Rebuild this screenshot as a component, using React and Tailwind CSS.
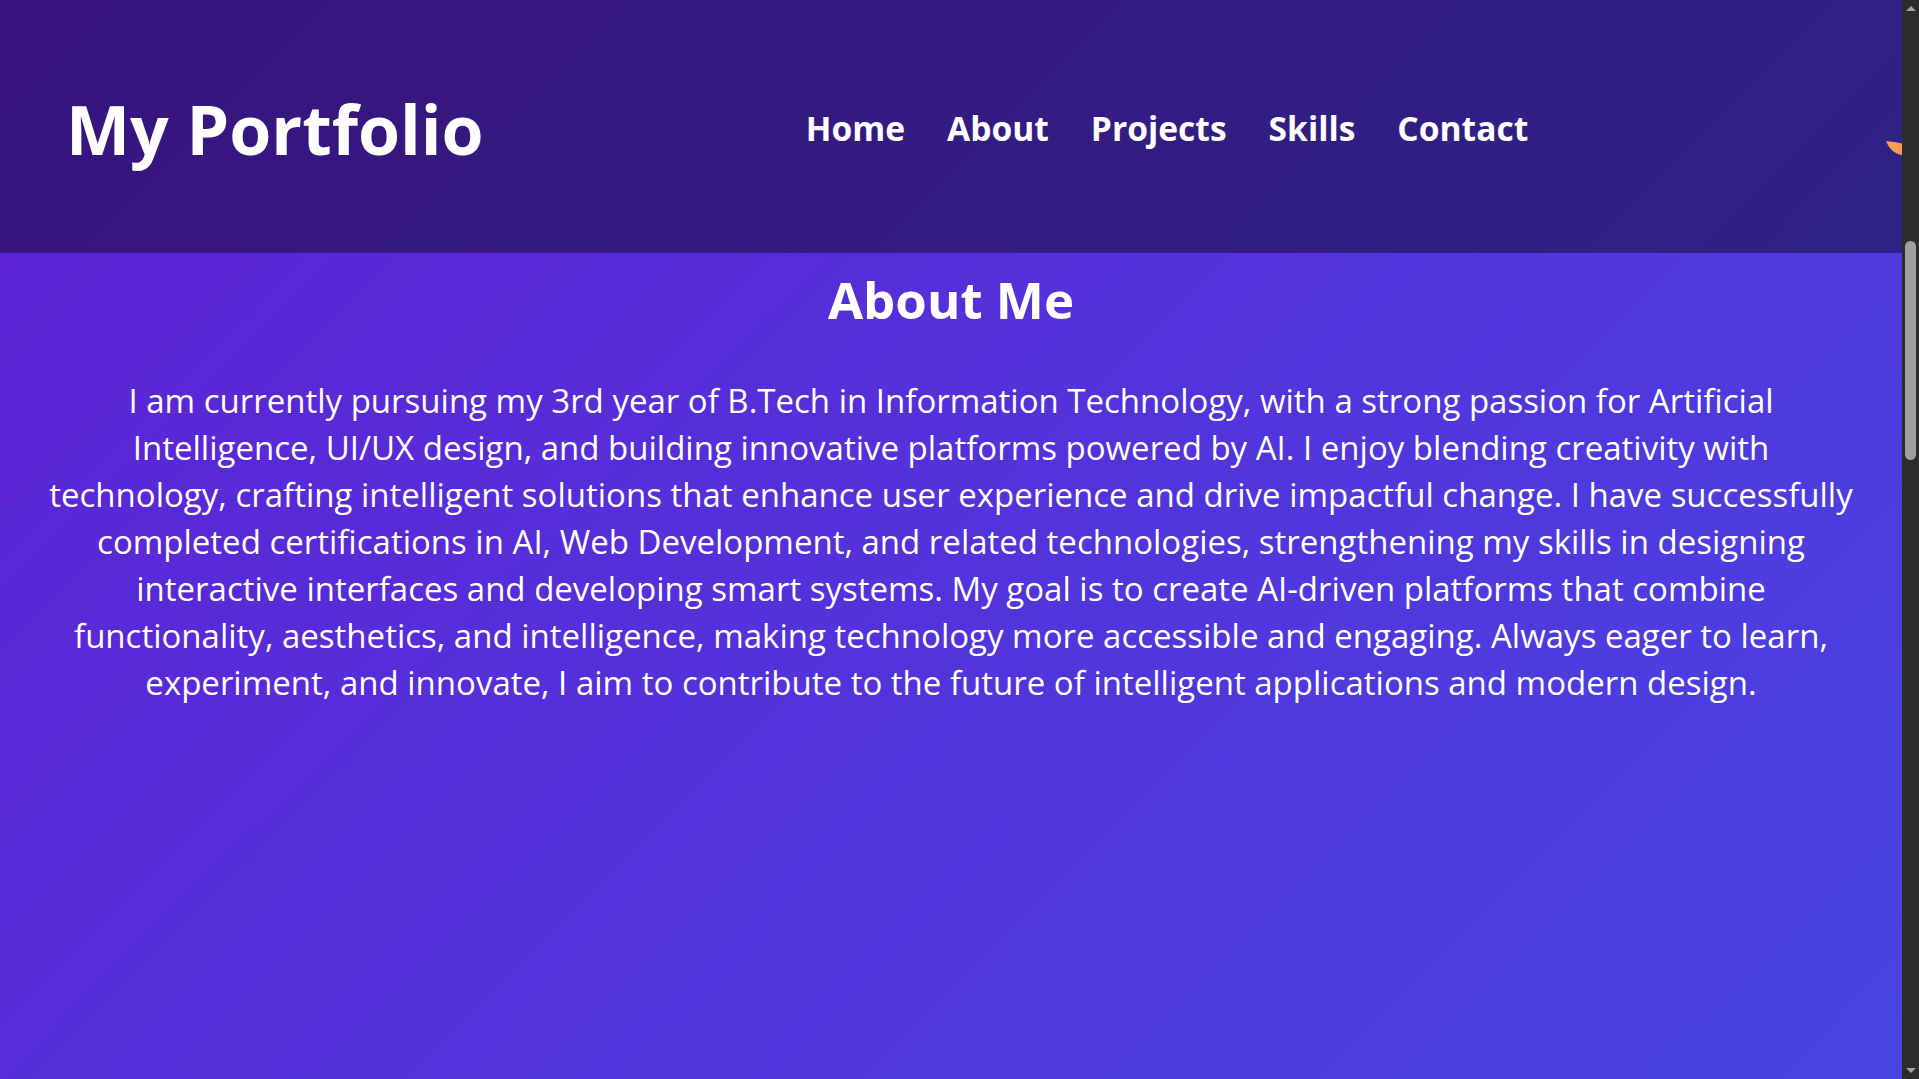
import React from "react";

const navLinks = ["Home", "About", "Projects", "Skills", "Contact"];

const aboutText =
  "I am currently pursuing my 3rd year of B.Tech in Information Technology, with a strong passion for Artificial Intelligence, UI/UX design, and building innovative platforms powered by AI. I enjoy blending creativity with technology, crafting intelligent solutions that enhance user experience and drive impactful change. I have successfully completed certifications in AI, Web Development, and related technologies, strengthening my skills in designing interactive interfaces and developing smart systems. My goal is to create AI-driven platforms that combine functionality, aesthetics, and intelligence, making technology more accessible and engaging. Always eager to learn, experiment, and innovate, I aim to contribute to the future of intelligent applications and modern design.";

// theme toggle moon, mostly pushed off the right edge
const MoonToggle = () => (
  <svg width="16" height="14" viewBox="0 0 16 14" className="block">
    <path d="M0 0 C5 0.6 11 1.6 16 2.4 L16 14 C9 13 3 8 0 0 Z" fill="#fb9d4b" />
  </svg>
);

const App = () => {
  return (
    <div
      className="flex h-screen w-full overflow-hidden text-white"
      style={{ fontFamily: '"Open Sans", "Noto Sans", sans-serif' }}
    >
      {/* Page */}
      <div className="flex-1 flex flex-col bg-[linear-gradient(135deg,#5e21d3,#4844e2)] overflow-hidden">
        {/* Header */}
        <header className="relative h-[253px] shrink-0 flex items-center pl-[66px] pt-[5px] bg-black/40">
          <h1 className="text-[68px] font-bold leading-none">My Portfolio</h1>
          <nav className="flex gap-[42px] ml-[322px]">
            {navLinks.map((link) => (
              <a key={link} href="#" className="text-[33.6px] font-bold leading-none">
                {link}
              </a>
            ))}
          </nav>
          <div className="absolute right-0 top-[141px]">
            <MoonToggle />
          </div>
        </header>

        {/* About */}
        <section className="flex-1 px-10 pt-[16px] text-center">
          <h2 className="text-[51px] font-bold leading-[1.2] mb-[47px]">About Me</h2>
          <p className="text-[33px] leading-[47px]">{aboutText}</p>
        </section>
      </div>

      {/* Scrollbar */}
      <div className="w-[17px] shrink-0 bg-[#2c2c2c] flex flex-col items-center">
        <div className="mt-[6px] w-0 h-0 border-l-[5px] border-r-[5px] border-b-[5px] border-l-transparent border-r-transparent border-b-[#a3a3a3]" />
        <div className="mt-[230px] w-[11px] h-[219px] rounded-full bg-[#a0a0a0]" />
        <div className="mt-auto mb-[6px] w-0 h-0 border-l-[5px] border-r-[5px] border-t-[5px] border-l-transparent border-r-transparent border-t-[#a3a3a3]" />
      </div>
    </div>
  );
};

export default App;
